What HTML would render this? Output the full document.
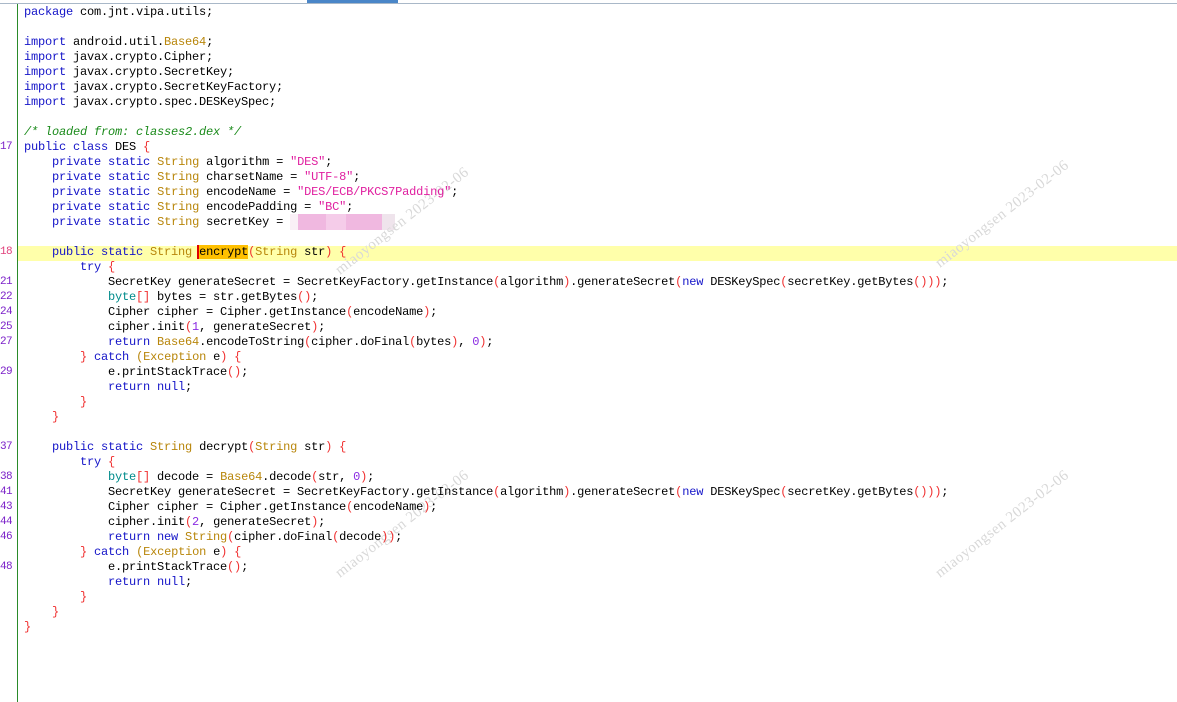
<!DOCTYPE html>
<html><head><meta charset="utf-8"><style>
html,body{margin:0;padding:0;background:#fff;width:1177px;height:702px;overflow:hidden;position:relative}
.top{position:absolute;left:0;top:3px;width:1177px;height:1px;background:#a9b8c8}
.tab{position:absolute;left:307px;top:0;width:91px;height:3px;background:#4a86c8}
.gut{position:absolute;left:17px;top:4px;width:1px;height:698px;background:#2a8a2a}
.hl{position:absolute;left:18px;top:246px;width:1159px;height:15px;background:#ffffaa}
.ln{position:absolute;left:0;width:12px;text-align:right;font:11px "Liberation Mono",monospace;color:#7a1fc8;line-height:15px;letter-spacing:-0.6px}
.l{position:absolute;left:24px;white-space:pre;font:12px "Liberation Mono",monospace;letter-spacing:-0.2px;line-height:15px;color:#000}
.k{color:#1414c8}
.t{color:#b8860b}
.p{color:#f03030}
.s{color:#e020a0}
.n{color:#8a2be2}
.c{color:#1a8a1a;font-style:italic}
.b{color:#008b8b}
.sel{background:#ffc000;border-left:2px solid #e00000;margin-left:-2px}
.wm{position:absolute;font:15px "Liberation Serif",serif;color:#d8d8d8;transform:rotate(-38deg);transform-origin:left bottom;white-space:nowrap;letter-spacing:0.5px}
.blur{position:absolute;top:214px;height:16px}
</style></head><body>
<div class="top"></div><div class="tab"></div><div class="gut"></div><div class="hl"></div>

<div class="blur" style="left:290px;width:8px;background:#faf0f6"></div>
<div class="blur" style="left:298px;width:28px;background:#f0b8e0"></div>
<div class="blur" style="left:326px;width:20px;background:#f5cce9"></div>
<div class="blur" style="left:346px;width:36px;background:#f0b8e0"></div>
<div class="blur" style="left:382px;width:13px;background:#efe4ec"></div>

<div class="wm" style="left:343px;top:262px">miaoyongsen 2023-02-06</div>
<div class="wm" style="left:943px;top:255px">miaoyongsen 2023-02-06</div>
<div class="wm" style="left:343px;top:565px">miaoyongsen 2023-02-06</div>
<div class="wm" style="left:943px;top:565px">miaoyongsen 2023-02-06</div>

<div class="ln" style="top:140px">17</div>
<div class="ln" style="top:245px;color:#e0407a">18</div>
<div class="ln" style="top:275px">21</div>
<div class="ln" style="top:290px">22</div>
<div class="ln" style="top:305px">24</div>
<div class="ln" style="top:320px">25</div>
<div class="ln" style="top:335px">27</div>
<div class="ln" style="top:365px">29</div>
<div class="ln" style="top:440px">37</div>
<div class="ln" style="top:470px">38</div>
<div class="ln" style="top:485px">41</div>
<div class="ln" style="top:500px">43</div>
<div class="ln" style="top:515px">44</div>
<div class="ln" style="top:530px">46</div>
<div class="ln" style="top:560px">48</div>

<div class="l" style="top:5px"><span class="k">package</span> com.jnt.vipa.utils;</div>
<div class="l" style="top:35px"><span class="k">import</span> android.util.<span class="t">Base64</span>;</div>
<div class="l" style="top:50px"><span class="k">import</span> javax.crypto.Cipher;</div>
<div class="l" style="top:65px"><span class="k">import</span> javax.crypto.SecretKey;</div>
<div class="l" style="top:80px"><span class="k">import</span> javax.crypto.SecretKeyFactory;</div>
<div class="l" style="top:95px"><span class="k">import</span> javax.crypto.spec.DESKeySpec;</div>
<div class="l" style="top:125px"><span class="c">/* loaded from: classes2.dex */</span></div>
<div class="l" style="top:140px"><span class="k">public class</span> DES <span class="p">{</span></div>
<div class="l" style="top:155px">    <span class="k">private static</span> <span class="t">String</span> algorithm = <span class="s">"DES"</span>;</div>
<div class="l" style="top:170px">    <span class="k">private static</span> <span class="t">String</span> charsetName = <span class="s">"UTF-8"</span>;</div>
<div class="l" style="top:185px">    <span class="k">private static</span> <span class="t">String</span> encodeName = <span class="s">"DES/ECB/PKCS7Padding"</span>;</div>
<div class="l" style="top:200px">    <span class="k">private static</span> <span class="t">String</span> encodePadding = <span class="s">"BC"</span>;</div>
<div class="l" style="top:215px">    <span class="k">private static</span> <span class="t">String</span> secretKey = </div>
<div class="l" style="top:245px">    <span class="k">public static</span> <span class="t">String</span> <span class="sel">encrypt</span><span class="p">(</span><span class="t">String</span> str<span class="p">)</span> <span class="p">{</span></div>
<div class="l" style="top:260px">        <span class="k">try</span> <span class="p">{</span></div>
<div class="l" style="top:275px">            SecretKey generateSecret = SecretKeyFactory.getInstance<span class="p">(</span>algorithm<span class="p">)</span>.generateSecret<span class="p">(</span><span class="k">new</span> DESKeySpec<span class="p">(</span>secretKey.getBytes<span class="p">()))</span>;</div>
<div class="l" style="top:290px">            <span class="b">byte</span><span class="p">[]</span> bytes = str.getBytes<span class="p">()</span>;</div>
<div class="l" style="top:305px">            Cipher cipher = Cipher.getInstance<span class="p">(</span>encodeName<span class="p">)</span>;</div>
<div class="l" style="top:320px">            cipher.init<span class="p">(</span><span class="n">1</span>, generateSecret<span class="p">)</span>;</div>
<div class="l" style="top:335px">            <span class="k">return</span> <span class="t">Base64</span>.encodeToString<span class="p">(</span>cipher.doFinal<span class="p">(</span>bytes<span class="p">)</span>, <span class="n">0</span><span class="p">)</span>;</div>
<div class="l" style="top:350px">        <span class="p">}</span> <span class="k">catch</span> <span class="t">(Exception</span> e<span class="p">)</span> <span class="p">{</span></div>
<div class="l" style="top:365px">            e.printStackTrace<span class="p">()</span>;</div>
<div class="l" style="top:380px">            <span class="k">return null</span>;</div>
<div class="l" style="top:395px">        <span class="p">}</span></div>
<div class="l" style="top:410px">    <span class="p">}</span></div>
<div class="l" style="top:440px">    <span class="k">public static</span> <span class="t">String</span> decrypt<span class="p">(</span><span class="t">String</span> str<span class="p">)</span> <span class="p">{</span></div>
<div class="l" style="top:455px">        <span class="k">try</span> <span class="p">{</span></div>
<div class="l" style="top:470px">            <span class="b">byte</span><span class="p">[]</span> decode = <span class="t">Base64</span>.decode<span class="p">(</span>str, <span class="n">0</span><span class="p">)</span>;</div>
<div class="l" style="top:485px">            SecretKey generateSecret = SecretKeyFactory.getInstance<span class="p">(</span>algorithm<span class="p">)</span>.generateSecret<span class="p">(</span><span class="k">new</span> DESKeySpec<span class="p">(</span>secretKey.getBytes<span class="p">()))</span>;</div>
<div class="l" style="top:500px">            Cipher cipher = Cipher.getInstance<span class="p">(</span>encodeName<span class="p">)</span>;</div>
<div class="l" style="top:515px">            cipher.init<span class="p">(</span><span class="n">2</span>, generateSecret<span class="p">)</span>;</div>
<div class="l" style="top:530px">            <span class="k">return new</span> <span class="t">String</span><span class="p">(</span>cipher.doFinal<span class="p">(</span>decode<span class="p">))</span>;</div>
<div class="l" style="top:545px">        <span class="p">}</span> <span class="k">catch</span> <span class="t">(Exception</span> e<span class="p">)</span> <span class="p">{</span></div>
<div class="l" style="top:560px">            e.printStackTrace<span class="p">()</span>;</div>
<div class="l" style="top:575px">            <span class="k">return null</span>;</div>
<div class="l" style="top:590px">        <span class="p">}</span></div>
<div class="l" style="top:605px">    <span class="p">}</span></div>
<div class="l" style="top:620px"><span class="p">}</span></div>
</body></html>
